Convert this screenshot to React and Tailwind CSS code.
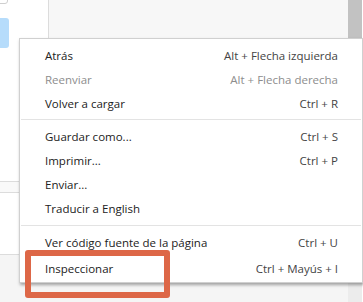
const items = [
  [
    { label: 'Atrás', shortcut: 'Alt + Flecha izquierda' },
    { label: 'Reenviar', shortcut: 'Alt + Flecha derecha', disabled: true },
    { label: 'Volver a cargar', shortcut: 'Ctrl + R' },
  ],
  [
    { label: 'Guardar como...', shortcut: 'Ctrl + S' },
    { label: 'Imprimir...', shortcut: 'Ctrl + P' },
    { label: 'Enviar...' },
    { label: 'Traducir a English' },
  ],
];

function MenuItem({ label, shortcut, disabled }) {
  return (
    <div className="flex h-[24px] items-center justify-between pl-[25px] pr-[24px]">
      <span className={disabled ? 'text-[#8d8d8d]' : 'text-[#222]'}>{label}</span>
      {shortcut && <span className={disabled ? 'text-[#8d8d8d]' : 'text-[#444]'}>{shortcut}</span>}
    </div>
  );
}

export default function App() {
  return (
    <div className="relative h-[302px] w-[363px] overflow-hidden bg-white font-['Open_Sans',sans-serif] text-[11.5px]">
      {/* page behind the menu */}
      <div className="flex h-[254px]">
        <div className="w-[49px] border-r border-[#dcdcdc] bg-white">
          <div className="-ml-[4px] -mt-[6px] h-[10px] w-[12px] rounded-[3px] border border-[#cfcfcf]" />
          <div className="mt-[14px] h-[30px] w-[9px] rounded-r-[3px] bg-[#b6dcfb]" />
          <div className="mt-[133px] h-[12px] border-y border-[#dcdcdc] bg-[#f9f9f9]" />
        </div>
        <div className="flex-1 bg-[#f7f7f7]" />
        <div className="w-[14px] bg-[#c2c2c2]" />
        <div className="w-[1px] bg-white" />
      </div>
      <div className="flex h-[48px] border-t border-[#dcdcdc] bg-[#f5f5f5]">
        <div className="flex-1" />
        <div className="w-[14px] bg-[#ececec]" />
        <div className="w-[1px] bg-white" />
      </div>

      {/* context menu */}
      <div className="absolute left-[19px] top-[38px] h-[245px] w-[344px] border border-[#d0d0d0] bg-white pt-[5px] shadow-[1px_2px_3px_rgba(0,0,0,0.35)]">
        {items[0].map((it) => (
          <MenuItem key={it.label} {...it} />
        ))}
        <div className="mb-[5px] ml-[1px] mr-[1px] mt-[3px] h-px bg-[#e3e3e3]" />
        {items[1].map((it) => (
          <MenuItem key={it.label} {...it} />
        ))}
        <div className="mb-[5px] ml-[1px] mr-[1px] mt-[4px] h-px bg-[#e3e3e3]" />
        <MenuItem label="Ver código fuente de la página" shortcut="Ctrl + U" />
        <div className="mt-[2px]">
          <MenuItem label="Inspeccionar" shortcut="Ctrl + Mayús + I" />
        </div>
      </div>

      {/* highlight */}
      <div className="absolute left-[25px] top-[250px] h-[48px] w-[145px] rounded-[3px] border-[6px] border-[#dd6747]" />
    </div>
  );
}
